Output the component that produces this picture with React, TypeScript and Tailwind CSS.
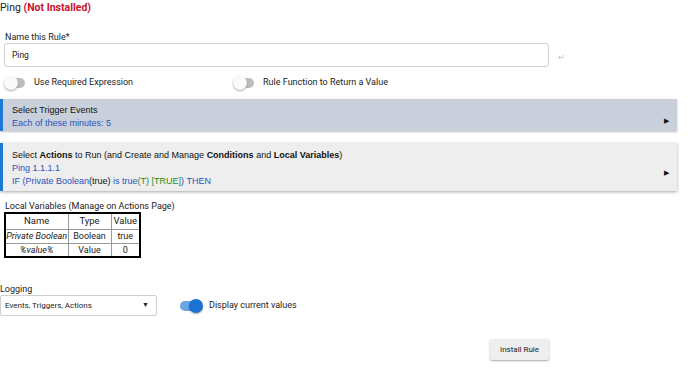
import React from "react";

const roboto = { fontFamily: "Roboto, 'Liberation Sans', sans-serif" };
const arial = { fontFamily: "'Liberation Sans', Arial, sans-serif" };

function Toggle({ on = false }: { on?: boolean }) {
  return (
    <span className="relative inline-flex h-[14px] w-[22px] items-center">
      <span className={`h-[10px] w-[20px] rounded-full ${on ? "bg-[#6aa6e6]" : "bg-[#bdbdbd]"}`} />
      <span
        className={`absolute top-[0px] h-[14px] w-[14px] rounded-full shadow-[0_1px_2px_rgba(0,0,0,0.35)] ${
          on ? "left-[9px] bg-[#1a73d4]" : "left-[-1px] bg-[#fafafa]"
        }`}
      />
    </span>
  );
}

function Arrow() {
  return <span className="ml-auto mr-[8px] self-center pt-[5px] text-[7px] leading-none text-[#111]">▶</span>;
}

export default function App() {
  return (
    <div className="h-[373px] w-[690px] overflow-hidden bg-white text-[#222]" style={roboto}>
      <div className="pt-[1px] text-[10.5px] leading-[14px]">
        Ping <span className="font-bold text-[#c8102e]">(Not Installed)</span>
      </div>

      <div className="mt-[16px] pl-[5px] text-[9px] leading-[12px]">Name this Rule*</div>
      <div className="flex items-center">
        <div className="ml-[4px] flex h-[24px] w-[545px] items-center rounded-[3px] border border-[#cfcfcf] pl-[7px] text-[8.5px]">
          Ping
        </div>
        <span className="ml-[9px] mt-[5px] text-[8px] text-[#bbb]">↵</span>
      </div>

      <div className="mt-[8px] flex h-[16px] items-center text-[9px]">
        <div className="ml-[5px] flex items-center">
          <Toggle />
          <span className="ml-[7px]">Use Required Expression</span>
        </div>
        <div className="ml-[101px] flex items-center">
          <Toggle />
          <span className="ml-[7px]">Rule Function to Return a Value</span>
        </div>
      </div>

      <div
        className="mt-[8px] flex h-[32px] w-[677px] items-start border-l-[3px] border-[#1e78d6] bg-[#c9d0dc] pt-[5px] shadow-[0_1px_2px_rgba(0,0,0,0.25)]"
        style={arial}
      >
        <div className="pl-[9px] text-[9px] leading-[13px]">
          <div className="text-[#111]">Select Trigger Events</div>
          <div className="text-[#2a52be]">Each of these minutes: 5</div>
        </div>
        <Arrow />
      </div>

      <div
        className="mt-[12px] flex h-[48px] w-[677px] items-start border-l-[3px] border-[#1e78d6] bg-[#eeeeee] pt-[6px] shadow-[0_1px_3px_rgba(0,0,0,0.35)]"
        style={arial}
      >
        <div className="pl-[9px] text-[9px] leading-[13px]">
          <div className="text-[#111]">
            Select <b>Actions</b> to Run (and Create and Manage <b>Conditions</b> and <b>Local Variables</b>)
          </div>
          <div className="text-[#2a52be]">Ping 1.1.1.1</div>
          <div className="text-[#2a52be]">
            IF (Private Boolean<span className="text-[#111]">(true)</span> is true
            <span className="text-[#1e8c1e]">(T) [TRUE]</span>) THEN
          </div>
        </div>
        <Arrow />
      </div>

      <div className="mt-[10px] pl-[5px] text-[9px] leading-[11px]">Local Variables (Manage on Actions Page)</div>
      <table className="ml-[4px] border-collapse border-2 border-black text-center text-[9px] leading-[12px]">
        <thead>
          <tr className="h-[16px] text-[9.5px]">
            <th className="w-[63px] border border-[#999] font-normal">Name</th>
            <th className="w-[43px] border border-[#999] font-normal">Type</th>
            <th className="w-[29px] border border-[#999] font-normal">Value</th>
          </tr>
        </thead>
        <tbody>
          <tr className="h-[14px]">
            <td className="border border-[#999] italic">Private Boolean</td>
            <td className="border border-[#999]">Boolean</td>
            <td className="border border-[#999]">true</td>
          </tr>
          <tr className="h-[14px]">
            <td className="border border-[#999] italic">%value%</td>
            <td className="border border-[#999]">Value</td>
            <td className="border border-[#999]">0</td>
          </tr>
        </tbody>
      </table>

      <div className="mt-[25px] text-[9px] leading-[12px]">Logging</div>
      <div className="flex items-center">
        <div className="flex h-[21px] w-[157px] items-center rounded-[2px] border border-[#cfcfcf] pl-[4px] pr-[7px] text-[8px]">
          Events, Triggers, Actions
          <span className="ml-auto text-[7px]">▼</span>
        </div>
        <div className="ml-[23px] flex items-center">
          <Toggle on />
          <span className="ml-[7px] text-[9px]">Display current values</span>
        </div>
      </div>

      <div className="mt-[23px] flex">
        <div className="ml-[490px] flex h-[21px] w-[59px] items-center justify-center rounded-[2px] bg-[#eeeeee] text-[8px] shadow-[0_1px_2px_rgba(0,0,0,0.35)]">
          Install Rule
        </div>
      </div>
    </div>
  );
}
